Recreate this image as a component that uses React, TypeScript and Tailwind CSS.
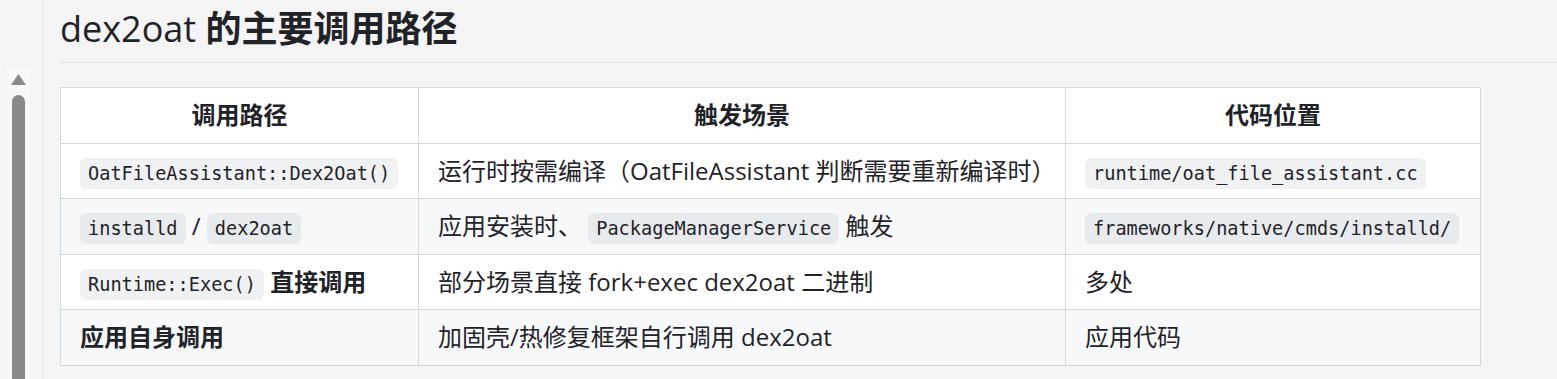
import React from "react";

const Code = ({ children, alt }: { children: React.ReactNode; alt?: boolean }) => (
  <code
    className={
      "rounded-[6px] px-[8px] py-[5px] text-[18.6px] leading-[20px] [font-family:'DejaVu_Sans_Mono',monospace] " +
      (alt ? "bg-[#e8ebee]" : "bg-[#eff1f3]")
    }
  >
    {children}
  </code>
);

const td = "border border-[#d1d9e0] px-[19px] py-[9px] text-left align-top";
const th = "border border-[#d1d9e0] px-[19px] py-[9px] text-center font-bold";

export default function App() {
  return (
    <div className="flex h-[379px] w-[1557px] overflow-hidden bg-[#f4f4f4] text-[#1f2328] [font-family:'Open_Sans','Noto_Sans_CJK_SC',sans-serif]">
      <div className="w-[43px] shrink-0 border-r border-[#e4e4e4] pl-[7px] pt-[68px]">
        <div className="flex h-full w-[23px] flex-col items-center bg-[#f8f8f8] pt-[6px]">
          <svg width="15" height="11" viewBox="0 0 15 11">
            <path d="M7.5 0 L15 11 L0 11 Z" fill="#8a8a8a" />
          </svg>
          <div className="mt-[10px] w-[13px] flex-1 rounded-t-full bg-[#898989]" />
        </div>
      </div>
      <div className="min-w-0 flex-1 pl-[17px]">
        <h2 className="border-b border-[#dde2e8] pb-[11px] pt-[6px] text-[36px] leading-[45px]">
          <span className="font-medium">dex2oat </span>
          <span className="font-bold">的主要调用路径</span>
        </h2>
        <table className="mt-[24px] w-[1420px] table-fixed border-collapse bg-white text-[24px] leading-[36.5px]">
          <colgroup>
            <col className="w-[358px]" />
            <col className="w-[647px]" />
            <col className="w-[415px]" />
          </colgroup>
          <thead>
            <tr className="bg-white">
              <th className={th}>调用路径</th>
              <th className={th}>触发场景</th>
              <th className={th}>代码位置</th>
            </tr>
          </thead>
          <tbody>
            <tr className="bg-white">
              <td className={td}>
                <Code>OatFileAssistant::Dex2Oat()</Code>
              </td>
              <td className={td}>运行时按需编译（OatFileAssistant 判断需要重新编译时）</td>
              <td className={td}>
                <Code>runtime/oat_file_assistant.cc</Code>
              </td>
            </tr>
            <tr className="bg-[#f6f8fa]">
              <td className={td}>
                <Code alt>installd</Code> / <Code alt>dex2oat</Code>
              </td>
              <td className={td}>
                应用安装时、 <Code alt>PackageManagerService</Code> 触发
              </td>
              <td className={td}>
                <Code alt>frameworks/native/cmds/installd/</Code>
              </td>
            </tr>
            <tr className="bg-white">
              <td className={td}>
                <Code>Runtime::Exec()</Code> <span className="font-bold">直接调用</span>
              </td>
              <td className={td}>部分场景直接 fork+exec dex2oat 二进制</td>
              <td className={td}>多处</td>
            </tr>
            <tr className="bg-[#f6f8fa]">
              <td className={td}>
                <span className="font-bold">应用自身调用</span>
              </td>
              <td className={td}>加固壳/热修复框架自行调用 dex2oat</td>
              <td className={td}>应用代码</td>
            </tr>
          </tbody>
        </table>
      </div>
    </div>
  );
}
